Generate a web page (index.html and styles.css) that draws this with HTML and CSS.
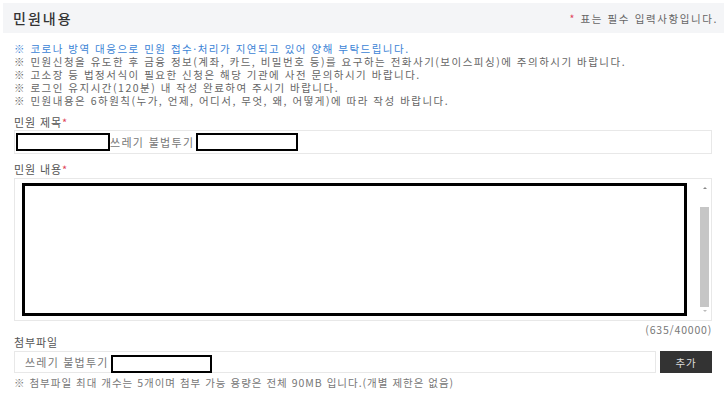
FILE: index.html
```html
<!DOCTYPE html>
<html lang="ko">
<head>
<meta charset="utf-8">
<link rel="stylesheet" href="styles.css">
</head>
<body>
<div class="page">
  <div class="head">
    <h2 class="title">민원내용</h2>
    <p class="req"><span class="star">*</span> 표는 필수 입력사항입니다.</p>
  </div>
  <ul class="notice">
    <li class="blue">※ 코로나 방역 대응으로 민원 접수·처리가 지연되고 있어 양해 부탁드립니다.</li>
    <li>※ 민원신청을 유도한 후 금융 정보(계좌, 카드, 비밀번호 등)를 요구하는 전화사기(보이스피싱)에 주의하시기 바랍니다.</li>
    <li>※ 고소장 등 법정서식이 필요한 신청은 해당 기관에 사전 문의하시기 바랍니다.</li>
    <li>※ 로그인 유지시간(120분) 내 작성 완료하여 주시기 바랍니다.</li>
    <li>※ 민원내용은 6하원칙(누가, 언제, 어디서, 무엇, 왜, 어떻게)에 따라 작성 바랍니다.</li>
  </ul>
  <div class="field first">
    <div class="label">민원 제목<span class="star">*</span></div>
    <div class="input title-input">
      <span class="mask m1"></span><span class="txt">쓰레기 불법투기</span><span class="mask m2"></span>
    </div>
  </div>
  <div class="field second">
    <div class="label">민원 내용<span class="star">*</span></div>
    <div class="textarea">
      <div class="mask big"></div>
      <div class="scroll">
        <span class="arrow up"></span>
        <span class="thumb"></span>
        <span class="arrow down"></span>
      </div>
    </div>
    <div class="count">(635/40000)</div>
  </div>
  <div class="field file">
    <div class="label">첨부파일</div>
    <div class="file-row">
      <div class="input file-input"><span class="txt">쓰레기 불법투기</span><span class="mask m3"></span></div>
      <button class="btn">추가</button>
    </div>
    <p class="note">※ 첨부파일 최대 개수는 5개이며 첨부 가능 용량은 전체 90MB 입니다.(개별 제한은 없음)</p>
  </div>
</div>
</body>
</html>
```
FILE: styles.css
```css
* { box-sizing: border-box; }
html, body { margin: 0; padding: 0; background: #fff; }
body {
  font-family: "Noto Sans CJK KR", "Noto Sans", sans-serif;
  color: #555;
  width: 728px;
  height: 395px;
  overflow: hidden;
}
.page { padding: 3px 4px 0 3px; }
.head {
  display: flex;
  justify-content: space-between;
  align-items: center;
  height: 30px;
  background: #f4f5f7;
  padding: 0 6px 0 10px;
}
.title { margin: 0; font-size: 14px; font-weight: 500; color: #333; letter-spacing: 2px; }
.req { margin: 0; font-size: 10.5px; color: #666; letter-spacing: 1.6px; }
.star { color: #e0455a; }
.notice {
  list-style: none;
  margin: 0;
  padding: 9px 0 0 11px;
  font-size: 10.5px;
  line-height: 13px;
  color: #666;
  letter-spacing: 1.5px;
  white-space: nowrap;
}
.notice .blue { color: #3b84d6; }
.field { padding: 0 12px 0 11px; }
.label { font-size: 11px; color: #555; line-height: 14px; letter-spacing: 0.9px; }
.first { margin-top: 8px; }
.first .label { margin-bottom: 1px; }
.input {
  display: flex;
  align-items: center;
  border: 1px solid #e8e8e8;
  height: 24px;
  font-size: 11px;
  color: #777;
}
.title-input { padding-left: 1px; }
.mask {
  display: inline-block;
  border: 2px solid #000;
  background: #fff;
  height: 18px;
}
.m1 { width: 94px; }
.m2 { width: 102px; margin-left: 2px; }
.txt { letter-spacing: 1.3px; }
.second { margin-top: 8px; }
.textarea {
  display: flex;
  border: 1px solid #e8e8e8;
  height: 143px;
  margin-top: 2px;
  padding: 4px 0 4px 7px;
}
.big { flex: 1; height: 133px; border-width: 3px; }
.scroll {
  width: 13px;
  margin-left: 11px;
  display: flex;
  flex-direction: column;
  align-items: center;
  padding: 1px 0;
}
.arrow { width: 0; height: 0; border-left: 2px solid transparent; border-right: 2px solid transparent; margin: 3px 0; }
.up { border-bottom: 2px solid #888; }
.down { border-top: 2px solid #bbb; }
.thumb { flex: 1; width: 9px; background: #c6c6c6; margin: 15px 0 0; }
.count { text-align: right; font-size: 10.5px; color: #777; line-height: 12px; margin-top: 3px; letter-spacing: 0.8px; }
.file .label { margin-bottom: 3px; line-height: 12px; }
.file-row { display: flex; gap: 4px; }
.file-input { flex: 1; height: 22px; padding-left: 10px; }
.file-input .txt { letter-spacing: 1.2px; }
.m3 { width: 101px; margin-left: 2px; height: 18px; align-self: flex-end; margin-bottom: -1px; }
.btn {
  width: 52px;
  height: 22px;
  border: 0;
  background: #333;
  color: #ddd;
  font-family: inherit;
  font-size: 10.5px;
  letter-spacing: 0.8px;
  padding: 0;
}
.note { margin: 4px 0 0; font-size: 10.5px; color: #777; letter-spacing: 1px; line-height: 12px; white-space: nowrap; }
```
